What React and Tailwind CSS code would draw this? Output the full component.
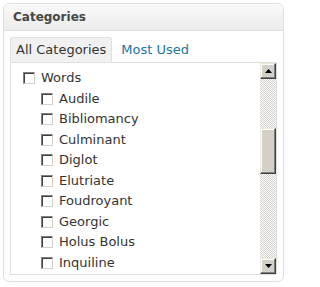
import { useState } from 'react';

const words = [
  'Audile',
  'Bibliomancy',
  'Culminant',
  'Diglot',
  'Elutriate',
  'Foudroyant',
  'Georgic',
  'Holus Bolus',
  'Inquiline',
];

function Box() {
  return (
    <span className="block h-[12px] w-[12px] shrink-0 border border-t-[#808080] border-l-[#808080] border-r-[#d4d0c8] border-b-[#d4d0c8] bg-white shadow-[inset_1px_1px_0_#404040]" />
  );
}

function ScrollButton({ up }) {
  return (
    <div className="flex h-[16px] w-[16px] items-center justify-center border border-t-[#ece9d8] border-l-[#ece9d8] border-r-[#404040] border-b-[#404040] bg-[#d4d0c8] shadow-[inset_-1px_-1px_0_#808080,inset_1px_1px_0_#fff]">
      <svg width="7" height="4" viewBox="0 0 7 4">
        {up ? <path d="M3.5 0L7 4H0z" fill="#000" /> : <path d="M0 0H7L3.5 4z" fill="#000" />}
      </svg>
    </div>
  );
}

export default function App() {
  const [tab, setTab] = useState('all');

  return (
    <div className="h-[287px] w-[287px] bg-white p-[3px]" style={{ fontFamily: '"DejaVu Sans", Verdana, sans-serif' }}>
      <div className="h-[279px] overflow-hidden rounded-[6px] border border-[#dfdfdf] bg-white">
        <div className="flex h-[27px] items-center border-b border-[#dfdfdf] bg-gradient-to-b from-[#f9f9f9] to-[#ececec] px-[9px] text-[12px] font-bold text-[#464646]">
          Categories
        </div>

        <div className="px-[6px] pt-[6px]">
          <div className="flex h-[25px] items-end">
            <button
              onClick={() => setTab('all')}
              className={`flex h-[25px] items-center rounded-t-[3px] border border-b-0 border-[#dfdfdf] px-[5px] text-[13px] text-[#333] ${tab === 'all' ? 'bg-[#f1f1f1]' : 'bg-white'}`}
            >
              All Categories
            </button>
            <button onClick={() => setTab('pop')} className="flex h-[25px] items-center px-[9px] text-[13px] text-[#21759b]">
              Most Used
            </button>
          </div>

          <div className="flex h-[213px] border border-[#dfdfdf] bg-white">
            <ul className="flex-1 pl-[12px] pt-[5px] text-[13px] text-[#333]">
              <li className="flex h-[20px] items-center gap-[6px]">
                <Box />
                <span>Words</span>
              </li>
              {words.map((w) => (
                <li key={w} className="ml-[18px] mt-[0.5px] flex h-[20px] items-center gap-[6px]">
                  <Box />
                  <span>{w}</span>
                </li>
              ))}
            </ul>

            <div className="flex w-[16px] flex-col">
              <ScrollButton up />
              <div className="flex flex-1 flex-col bg-[repeating-conic-gradient(#d4d0c8_0%_25%,#fff_0%_50%)] bg-[length:2px_2px]">
                <div className="h-[49px]" />
                <div className="h-[46px] border border-t-[#ece9d8] border-l-[#ece9d8] border-r-[#404040] border-b-[#404040] bg-[#d4d0c8] shadow-[inset_-1px_-1px_0_#808080,inset_1px_1px_0_#fff]" />
              </div>
              <ScrollButton />
            </div>
          </div>
        </div>
      </div>
    </div>
  );
}
